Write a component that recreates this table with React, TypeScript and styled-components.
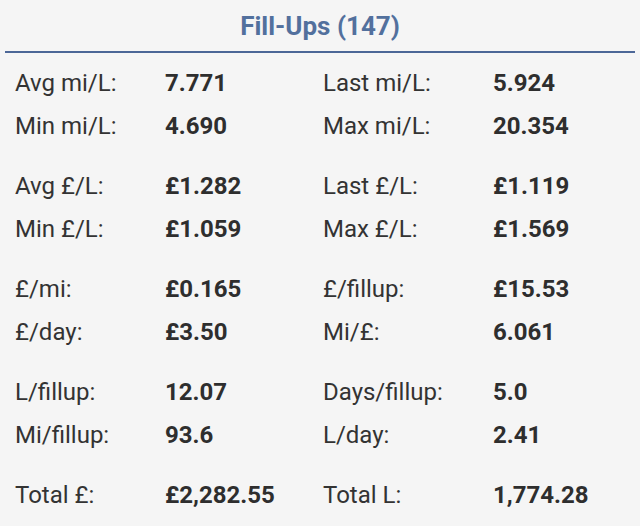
import React from "react";
import styled, { createGlobalStyle } from "styled-components";

const Global = createGlobalStyle`
  html, body { margin: 0; padding: 0; background: #f5f5f5; }
  body { font-family: Roboto, "Noto Sans", sans-serif; }
`;

const Page = styled.div`
  width: 640px;
  height: 526px;
  background: #f5f5f5;
  overflow: hidden;
`;

const Header = styled.div`
  margin: 0 5px;
  height: 51px;
  display: flex;
  align-items: center;
  justify-content: center;
  border-bottom: 2px solid #4c6797;
  color: #52709d;
  font-size: 26px;
  font-weight: 700;
  box-sizing: content-box;
`;

const Body = styled.div`
  padding: 9px 0 0 15px;
`;

const Group = styled.div`
  display: grid;
  grid-template-columns: 150px 158px 170px 1fr;
  grid-auto-rows: 43px;
  align-items: center;
  & + & { margin-top: 17px; }
`;

const Label = styled.div`
  font-size: 24px;
  line-height: 43px;
  color: #333333;
  font-weight: 400;
`;

const Value = styled.div`
  font-size: 24px;
  line-height: 43px;
  color: #2e2e2e;
  font-weight: 700;
`;

type Row = [string, string, string, string];

const groups: Row[][] = [
  [
    ["Avg mi/L:", "7.771", "Last mi/L:", "5.924"],
    ["Min mi/L:", "4.690", "Max mi/L:", "20.354"],
  ],
  [
    ["Avg £/L:", "£1.282", "Last £/L:", "£1.119"],
    ["Min £/L:", "£1.059", "Max £/L:", "£1.569"],
  ],
  [
    ["£/mi:", "£0.165", "£/fillup:", "£15.53"],
    ["£/day:", "£3.50", "Mi/£:", "6.061"],
  ],
  [
    ["L/fillup:", "12.07", "Days/fillup:", "5.0"],
    ["Mi/fillup:", "93.6", "L/day:", "2.41"],
  ],
  [["Total £:", "£2,282.55", "Total L:", "1,774.28"]],
];

export default function App() {
  return (
    <Page>
      <Global />
      <Header>Fill-Ups (147)</Header>
      <Body>
        {groups.map((g, gi) => (
          <Group key={gi}>
            {g.map((r, ri) => (
              <React.Fragment key={ri}>
                <Label>{r[0]}</Label>
                <Value>{r[1]}</Value>
                <Label>{r[2]}</Label>
                <Value>{r[3]}</Value>
              </React.Fragment>
            ))}
          </Group>
        ))}
      </Body>
    </Page>
  );
}
